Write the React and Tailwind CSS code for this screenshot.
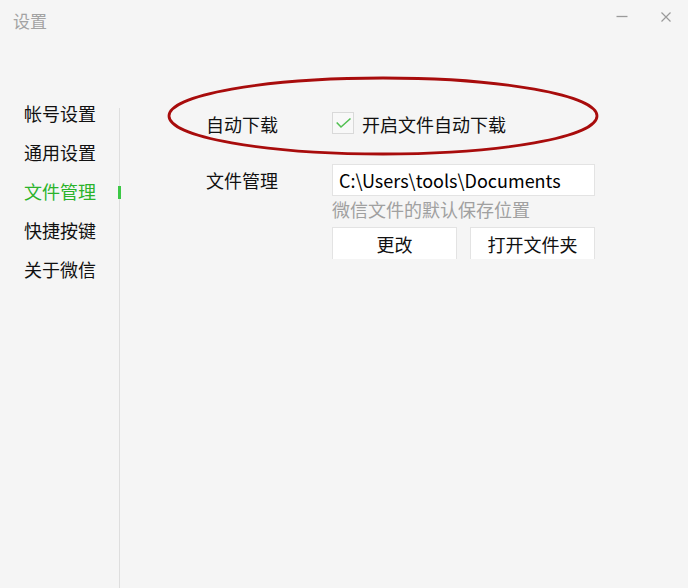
import React from "react";

const navItems = ["帐号设置", "通用设置", "文件管理", "快捷按键", "关于微信"];

const App = () => {
  const active = "文件管理";

  return (
    <div
      className="relative w-[688px] h-[588px] overflow-hidden bg-[#f5f5f5] text-[#111] flex flex-col"
      style={{ fontFamily: '"Noto Sans CJK SC", "Noto Sans", sans-serif' }}
    >
      {/* Title bar */}
      <div className="h-[95px] flex items-start justify-between">
        <div className="pl-[13px] pt-[9px] text-[17px] leading-[24px] text-[#a3a3a3]">设置</div>
        <div className="flex items-start pt-[11px] pr-[17px] gap-[33px]">
          <svg width="12" height="12" viewBox="0 0 12 12">
            <line x1="0.5" y1="5.5" x2="11.5" y2="5.5" stroke="#9a9a9a" strokeWidth="1.3" />
          </svg>
          <svg width="10" height="10" viewBox="0 0 10 10" className="mt-[1px]">
            <path d="M0.5 0.5 L9.5 9.5 M9.5 0.5 L0.5 9.5" stroke="#9a9a9a" strokeWidth="1.2" />
          </svg>
        </div>
      </div>

      {/* Body */}
      <div className="flex flex-1">
        {/* Sidebar */}
        <div className="flex">
          <div className="w-[119px] -mt-px">
            {navItems.map((item) => (
              <div
                key={item}
                className={`relative h-[39px] flex items-center pl-[24px] text-[18px] ${
                  item === active ? "text-[#2bb32b]" : "text-[#111]"
                }`}
              >
                {item}
                {item === active && (
                  <span className="absolute right-[-2px] top-[14px] w-[3px] h-[13px] bg-[#3cc846]" />
                )}
              </div>
            ))}
          </div>
          <div className="w-px mt-[13px] bg-[#dedede]" />
        </div>

        {/* Content */}
        <div className="relative flex-1 pl-[86px] pt-[17px]">
          {/* auto download row */}
          <div className="flex items-center h-[22px]">
            <div className="w-[126px] text-[18px] leading-[22px] mt-[2px]">自动下载</div>
            <div className="w-[22px] h-[22px] border border-[#d9d9d9] bg-[#f8f8f8] flex items-center justify-center">
              <svg width="20" height="20" viewBox="0 0 20 20">
                <polyline
                  points="3.7,9.5 8,14 17.5,5.5"
                  fill="none"
                  stroke="#52c052"
                  strokeWidth="1.6"
                />
              </svg>
            </div>
            <div className="ml-[8px] text-[18px] leading-[22px] mt-[2px]">开启文件自动下载</div>
          </div>

          {/* file location row */}
          <div className="flex mt-[30px]">
            <div className="w-[126px] text-[18px] leading-[32px]">文件管理</div>
            <div className="flex flex-col w-[263px]">
              <div className="h-[32px] bg-white border border-[#e3e3e3] pl-[6px] text-[18px] leading-[30px] text-black">
                C:\Users\tools\Documents
              </div>
              <div className="h-[31px] text-[18px] leading-[27px] text-[#a0a0a0]">微信文件的默认保存位置</div>
              <div className="flex gap-[13px]">
                <button className="w-[125px] h-[32px] bg-white border border-b-0 border-[#e3e3e3] text-[18px] leading-[30px] text-[#111]">
                  更改
                </button>
                <button className="w-[125px] h-[32px] bg-white border border-b-0 border-[#e3e3e3] text-[18px] leading-[30px] text-[#111]">
                  打开文件夹
                </button>
              </div>
            </div>
          </div>

          {/* Annotation ellipse */}
          <svg
            className="absolute left-[44px] top-[-20px] pointer-events-none"
            width="440"
            height="84"
            viewBox="0 0 440 84"
          >
            <ellipse cx="219" cy="41" rx="214" ry="38" fill="none" stroke="#a80c0c" strokeWidth="2.8" />
          </svg>
        </div>
      </div>
    </div>
  );
};

export default App;
